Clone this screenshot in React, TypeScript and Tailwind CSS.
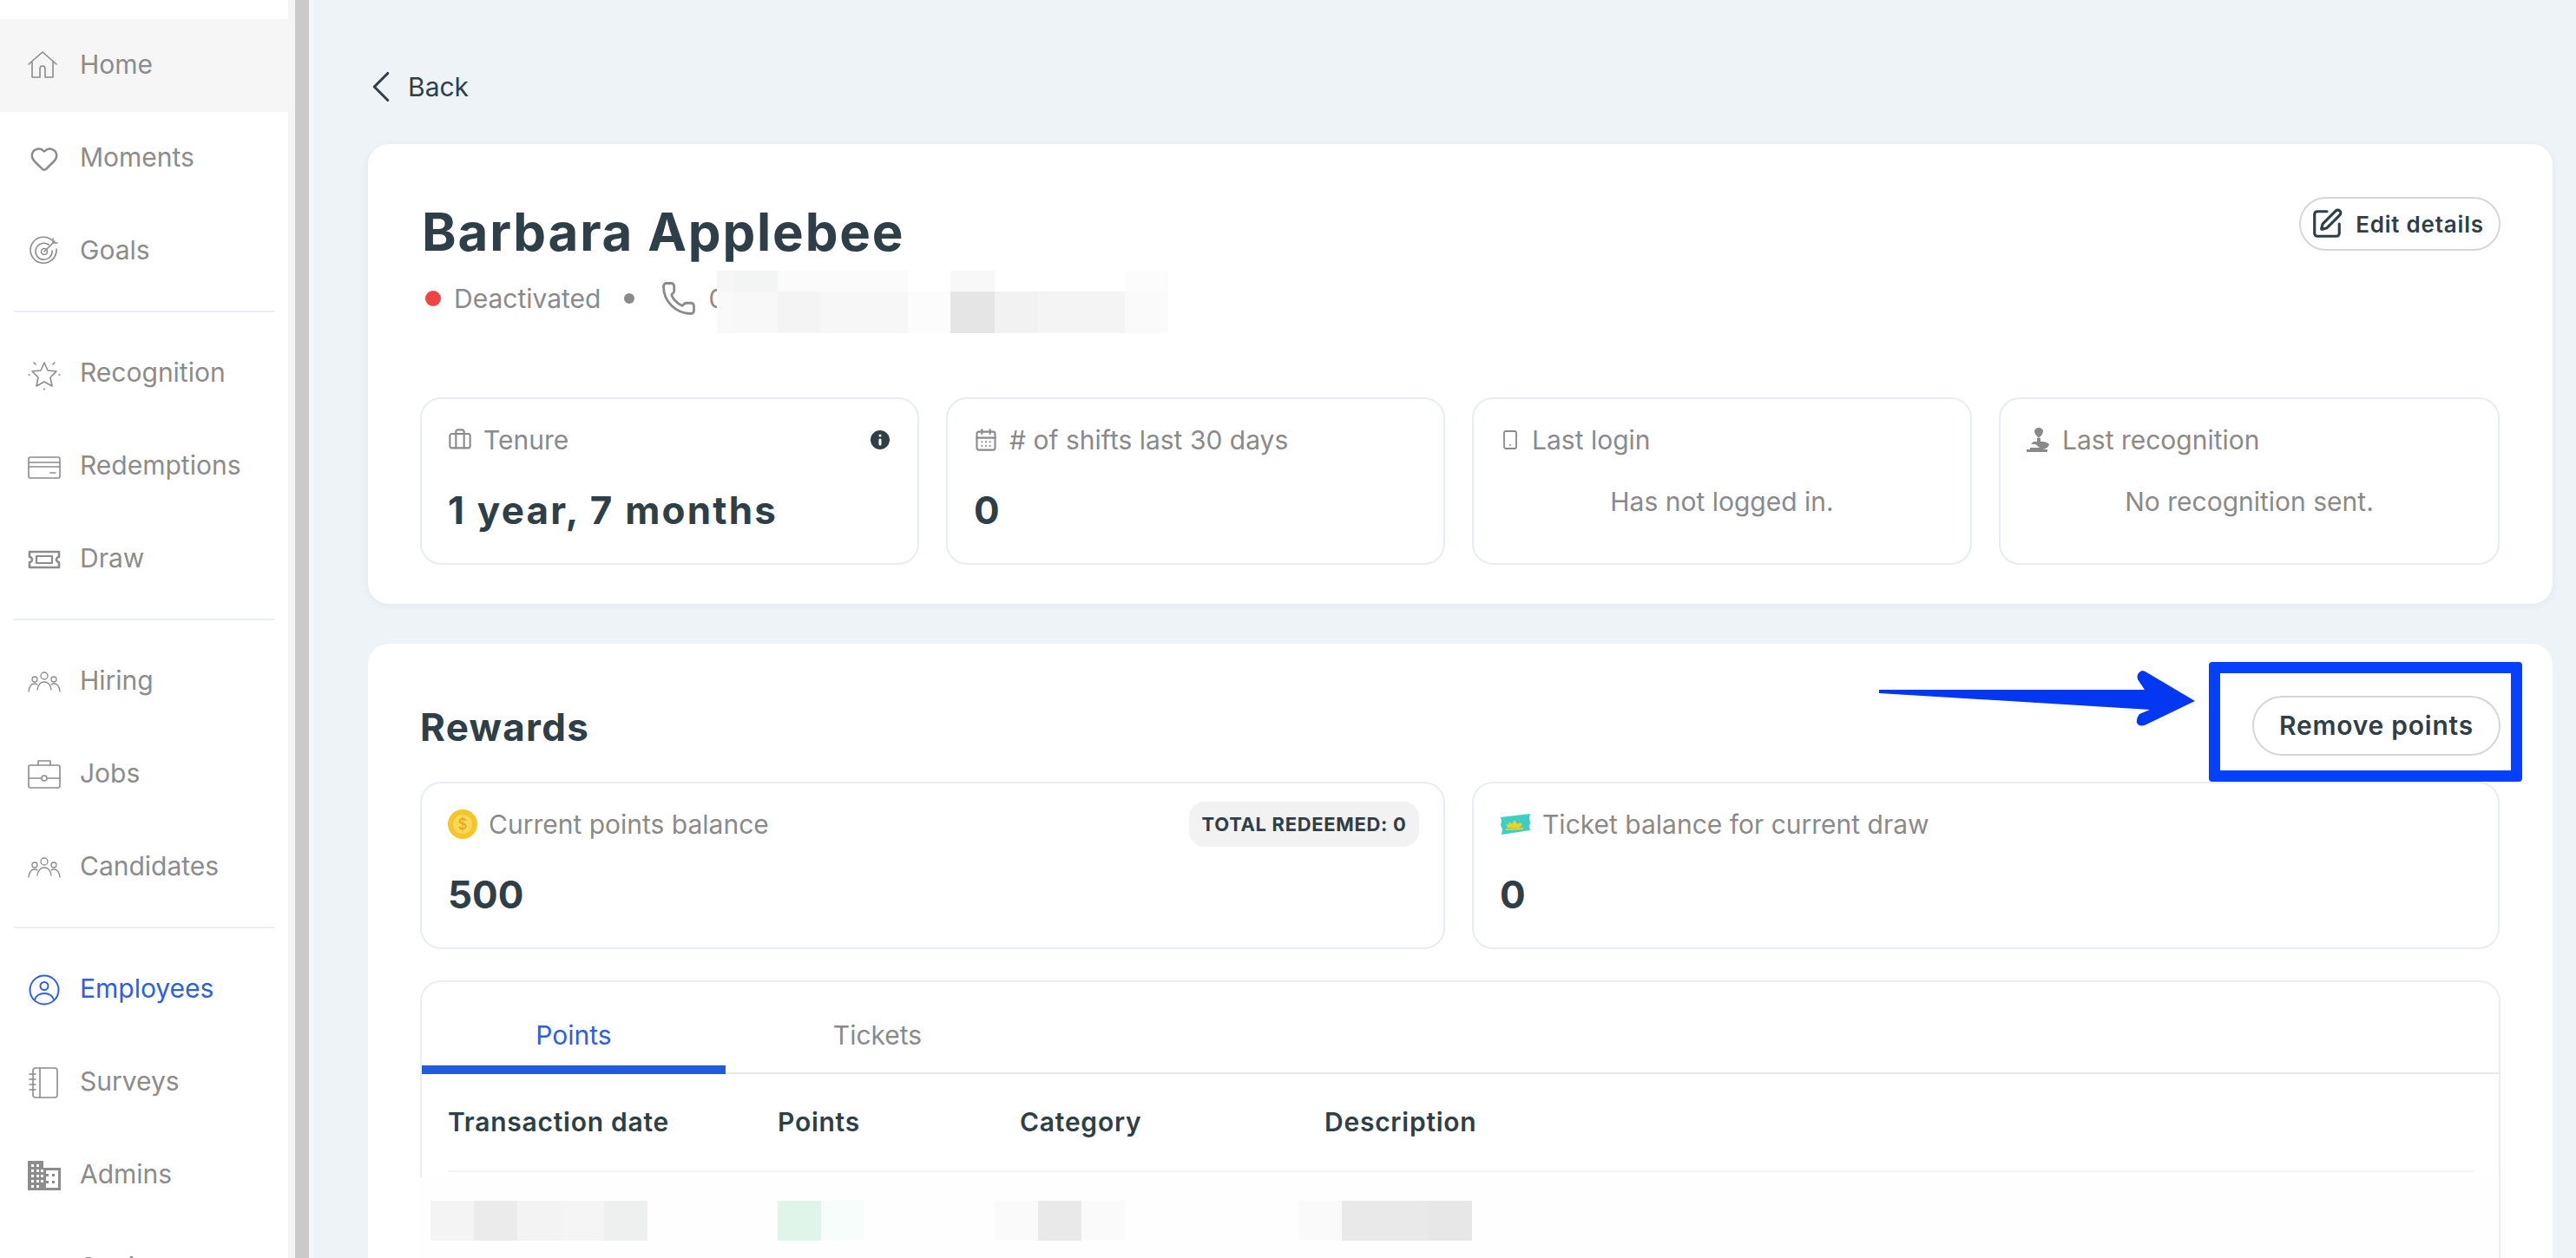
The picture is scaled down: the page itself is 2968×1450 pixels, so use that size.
import type { ReactNode } from "react";
import { Briefcase, CalendarDays, ChevronLeft, Heart, Info, Phone, Smartphone, SquarePen } from "lucide-react";

const ink = "text-[#2f3f48]";

function IconBox({ children, className = "" }: { children: ReactNode; className?: string }) {
  return (
    <svg className={`w-[38px] h-[38px] shrink-0 ${className}`} viewBox="0 0 38 38" fill="none" stroke="currentColor" strokeWidth="1.6" strokeLinecap="round" strokeLinejoin="round">
      {children}
    </svg>
  );
}

const HomeIcon = () => (
  <IconBox>
    <path d="M1 17 17 3 33 17M5 14v18h9V22a3 3 0 0 1 6 0v10h9V14" />
  </IconBox>
);
const GoalIcon = () => (
  <IconBox>
    <path d="M28 6a15 15 0 1 0 5 10M24 11a9.5 9.5 0 1 0 4 7" />
    <circle cx="19" cy="19" r="3.5" />
    <path d="M19 19 31 7M29 4v5h5" />
  </IconBox>
);
const StarIcon = () => (
  <IconBox>
    <path d="M19 6l4 9 10 1-7 7 2 10-9-5-9 5 2-10-7-7 10-1z" />
    <path d="M7 6l2 2M31 6l-2 2M1 20h1M36 20h1M19 36v1" />
  </IconBox>
);
const CardIcon = () => (
  <IconBox>
    <rect x="1" y="8" width="36" height="24" rx="2" />
    <path d="M1 14h36M1 19h36M26 26h6" />
  </IconBox>
);
const TicketIcon = () => (
  <IconBox>
    <path strokeWidth="2.6" d="M2 10h34v6a3 3 0 0 0 0 6v6H2v-6a3 3 0 0 0 0-6z" />
    <rect x="10" y="15" width="18" height="8" strokeWidth="2.2" />
  </IconBox>
);
const PeopleIcon = () => (
  <IconBox>
    <circle cx="19" cy="12" r="4" strokeWidth="1.3" />
    <circle cx="8" cy="16" r="3" strokeWidth="1.3" />
    <circle cx="30" cy="16" r="3" strokeWidth="1.3" />
    <path strokeWidth="1.3" d="M11 28c1-6 4-9 8-9s7 3 8 9M1 30c.5-5 3-9 7-9 1 0 2 .3 3 1M37 30c-.5-5-3-9-7-9-1 0-2 .3-3 1" />
  </IconBox>
);
const JobsIcon = () => (
  <IconBox>
    <rect x="1" y="8" width="36" height="26" rx="2" />
    <path d="M12 8V3h14v5M1 23h14M23 23h14" />
    <circle cx="19" cy="23" r="3" />
  </IconBox>
);
const EmployeeIcon = () => (
  <IconBox>
    <circle cx="19" cy="19" r="16.5" strokeWidth="2" />
    <circle cx="19" cy="14.5" r="4.5" strokeWidth="2" />
    <path strokeWidth="2" d="M8 30c2-5 6-7 11-7s9 2 11 7" />
  </IconBox>
);
const SurveyIcon = () => (
  <IconBox>
    <rect x="6" y="2" width="28" height="34" rx="3" />
    <path d="M14 2v34M2 9h7M2 15h7M2 21h7M2 27h7" />
  </IconBox>
);
const AdminIcon = () => (
  <svg className="w-[38px] h-[38px] shrink-0" viewBox="0 0 38 38" fill="currentColor">
    <path
      fillRule="evenodd"
      d="M0 2h18v8h20v26H0zM4 6h3v3H4zM10 6h3v3h-3zM4 12h3v3H4zM10 12h3v3h-3zM15 12h3v3h-3zM4 18h3v3H4zM10 18h3v3h-3zM15 18h3v3h-3zM4 24h3v3H4zM10 24h3v3h-3zM15 24h3v3h-3zM4 30h3v3H4zM10 30h3v3h-3zM21 13h14v20H21z"
    />
    <rect x="21" y="17" width="3" height="3" />
    <rect x="28" y="17" width="3" height="3" />
    <rect x="21" y="25" width="3" height="3" />
    <rect x="28" y="25" width="3" height="3" />
  </svg>
);
const SettingsIcon = () => (
  <svg className="w-[38px] h-[38px] shrink-0" viewBox="0 0 38 38" fill="currentColor">
    <circle cx="19" cy="24" r="13" />
    <rect x="15" y="7" width="8" height="8" />
  </svg>
);

type NavItem = { label: string; icon: ReactNode; hover?: boolean; active?: boolean };

const navGroups: NavItem[][] = [
  [
    { label: "Home", icon: <HomeIcon />, hover: true },
    { label: "Moments", icon: <Heart className="w-[34px] h-[34px] mx-[2px] shrink-0" strokeWidth={1.8} /> },
    { label: "Goals", icon: <GoalIcon /> },
  ],
  [
    { label: "Recognition", icon: <StarIcon /> },
    { label: "Redemptions", icon: <CardIcon /> },
    { label: "Draw", icon: <TicketIcon /> },
  ],
  [
    { label: "Hiring", icon: <PeopleIcon /> },
    { label: "Jobs", icon: <JobsIcon /> },
    { label: "Candidates", icon: <PeopleIcon /> },
  ],
  [
    { label: "Employees", icon: <EmployeeIcon />, active: true },
    { label: "Surveys", icon: <SurveyIcon /> },
    { label: "Admins", icon: <AdminIcon /> },
    { label: "Settings", icon: <SettingsIcon /> },
  ],
];

function Sidebar() {
  return (
    <aside className="w-[332px] shrink-0 bg-white pt-[22px] font-['Inter',sans-serif] text-[30px]">
      {navGroups.map((group, i) => (
        <div key={group[0].label}>
          {i > 0 && <div className="mx-4 mt-[15px] mb-[17px] h-[2px] bg-[#e9edf3]" />}
          {group.map((item) => (
            <div
              key={item.label}
              className={`flex h-[107px] items-center gap-[22px] pl-[32px] ${item.hover ? "bg-[#f6f6f6]" : ""} ${item.active ? "text-[#2d5fe0]" : "text-[#8c8c8c]"}`}
            >
              {item.icon}
              <span className="-mt-[2px]">{item.label}</span>
            </div>
          ))}
        </div>
      ))}
    </aside>
  );
}

type Cell = { w: number; c: string };

function PixelRow({ cells, className = "" }: { cells: Cell[]; className?: string }) {
  return (
    <div className={`flex ${className}`}>
      {cells.map((cell, i) => (
        <div key={i} className="h-full shrink-0" style={{ width: cell.w, background: cell.c }} />
      ))}
    </div>
  );
}

const phoneTop: Cell[] = [
  { w: 19, c: "#f6f6f6" },
  { w: 51, c: "#f3f5f5" },
  { w: 150, c: "#fbfbfb" },
  { w: 49, c: "#ffffff" },
  { w: 51, c: "#f8f8f8" },
  { w: 150, c: "#ffffff" },
  { w: 50, c: "#fcfcfc" },
];
const phoneBottom: Cell[] = [
  { w: 19, c: "#f9f9f9" },
  { w: 51, c: "#f8f8f8" },
  { w: 49, c: "#f4f4f4" },
  { w: 101, c: "#f7f7f7" },
  { w: 49, c: "#fcfcfc" },
  { w: 51, c: "#e5e5e5" },
  { w: 50, c: "#f2f2f2" },
  { w: 100, c: "#f4f4f4" },
  { w: 50, c: "#fafafa" },
];

function StatCard({ icon, label, right, children }: { icon: ReactNode; label: string; right?: ReactNode; children: ReactNode }) {
  return (
    <div className="h-[193px] rounded-[24px] border-2 border-[#e8edf3] bg-white px-[30px] pt-[29px]">
      <div className="flex h-[36px] items-center justify-between">
        <div className="flex items-center gap-[13px] text-[#8a8a8a]">
          {icon}
          <span className="text-[30px] leading-none">{label}</span>
        </div>
        {right}
      </div>
      {children}
    </div>
  );
}

const BigValue = ({ children }: { children: ReactNode }) => (
  <div className={`mt-[35px] text-[44px] font-bold leading-[56px] ${ink}`}>{children}</div>
);
const Muted = ({ children }: { children: ReactNode }) => (
  <div className="mt-[25px] text-center text-[30px] leading-[56px] text-[#8a8a8a]">{children}</div>
);

function OutlineButton({ children, className = "" }: { children: ReactNode; className?: string }) {
  return (
    <div className={`flex items-center justify-center rounded-full border-2 border-[#d6d6d6] bg-white font-semibold ${ink} ${className}`}>
      {children}
    </div>
  );
}

function Coin() {
  return (
    <svg className="h-[34px] w-[34px] shrink-0" viewBox="0 0 34 34">
      <circle cx="17" cy="17" r="17" fill="#f5c52c" />
      <circle cx="17" cy="17" r="11" fill="#fbd75b" />
      <text x="17" y="23" textAnchor="middle" fontSize="17" fontFamily="Inter, sans-serif" fill="#e0a615">$</text>
    </svg>
  );
}

function Tickets() {
  return (
    <svg className="h-[24px] w-[36px] shrink-0" viewBox="0 0 36 24">
      <path d="M1 4 35 0l-1 5 1 5-1 5 1 4-33 5 1-6-2-5 1-5z" fill="#3ccfc8" />
      <path d="M7 11l3 2 1-4 3 3 3-5 3 5 4-2 2 3-4 3H9z" fill="#f2d21f" />
      <path d="M7 18l20-1" stroke="#f2d21f" strokeWidth="2" />
    </svg>
  );
}

function HandHeart() {
  return (
    <svg className="h-[28px] w-[28px] shrink-0" viewBox="0 0 28 28" fill="#8a8a8a">
      <path d="M14 0c-3 0-5 2-5 4 0 3 3 6 5 8 2-2 5-5 5-8 0-2-2-4-5-4z" />
      <rect x="12" y="12" width="4" height="4" />
      <path d="M8 16h10c3 0 6 1 8 3-1 4-5 6-9 6H4v-2h11l-5-4H5z" />
      <rect x="0" y="25" width="24" height="3" />
    </svg>
  );
}

function Arrow() {
  return (
    <svg className="absolute left-[2165px] top-[773px]" width="364" height="65" viewBox="0 0 364 65">
      <path
        d="M0 22 L306 22 L298 10 Q296 3 303 0 Q306 0 310 3 L364 35 L308 62 Q300 66 297 60 Q296 55 300 50 L312 45 L0 26 Z"
        fill="#0437f2"
      />
    </svg>
  );
}

function Points() {
  const rows: { x: string; cells: Cell[] }[] = [
    {
      x: "w-[400px]",
      cells: [
        { w: 50, c: "#f4f4f4" },
        { w: 50, c: "#ebebeb" },
        { w: 50, c: "#f3f3f3" },
        { w: 50, c: "#f5f5f5" },
        { w: 50, c: "#eeefef" },
      ],
    },
    { x: "w-[250px]", cells: [{ w: 50, c: "#e0f5ea" }, { w: 50, c: "#f7fdfa" }] },
    {
      x: "w-[350px]",
      cells: [
        { w: 50, c: "#fafafa" },
        { w: 50, c: "#e9e9e9" },
        { w: 50, c: "#fafafa" },
      ],
    },
    {
      x: "w-[250px]",
      cells: [
        { w: 50, c: "#fafafa" },
        { w: 100, c: "#e9e9e9" },
        { w: 50, c: "#e7e7e7" },
      ],
    },
  ];
  return (
    <div className="relative mt-[36px] h-[340px] rounded-t-[24px] border-2 border-b-0 border-[#eeeeee]">
      <div className="flex h-[106px] border-b-2 border-[#e9e9e9]">
        <div className="-mb-[2px] flex w-[350px] items-center justify-center border-b-[10px] border-[#1f5bdc] pt-[26px] text-[30px] text-[#2d5fe0]">Points</div>
        <div className="flex w-[350px] items-center justify-center pt-[18px] text-[30px] text-[#8a8a8a]">Tickets</div>
      </div>
      <div className={`mx-[30px] flex h-[113px] items-center border-b-2 border-[#f3f3f3] text-[30px] font-semibold tracking-[0.025em] ${ink}`}>
        <div className="w-[380px]">Transaction date</div>
        <div className="w-[279px]">Points</div>
        <div className="w-[351px]">Category</div>
        <div>Description</div>
      </div>
      <div className="absolute left-[-4px] right-0 top-[225px] flex h-[120px] bg-[#fefefe] pl-[14px] pt-[27px]">
        {rows.map((r, i) => (
          <div key={i} className={r.x}>
            <PixelRow cells={r.cells} className="h-[46px]" />
          </div>
        ))}
      </div>
    </div>
  );
}

export default function App() {
  return (
    <div className="relative flex h-[1450px] overflow-hidden bg-[#eef3f7] font-['Inter',sans-serif]">
      <Sidebar />
      <div className="w-[8px] shrink-0 bg-[#f5f5f5]" />
      <div className="w-[16px] shrink-0 bg-[#cbcbcb]" />
      <div className="w-[6px] shrink-0 bg-[#f5f7f9]" />

      <main className="min-w-0 flex-1 pl-[62px] pr-[27px]">
        <div className={`flex h-[166px] items-center pt-[34px] text-[30px] ${ink}`}>
          <ChevronLeft className="-ml-[16px] h-[62px] w-[62px]" strokeWidth={1.2} />
          <span>Back</span>
        </div>

        <section className="rounded-[24px] bg-white px-[60px] pt-[61px] pb-[45px] shadow-[0_2px_10px_rgba(30,50,70,0.06)]">
          <div className="flex h-[231px] items-start justify-between">
            <div>
              <h1 className={`pl-[2px] text-[60px] font-bold leading-[80px] tracking-[0.03em] ${ink}`}>Barbara Applebee</h1>
              <div className="relative mt-[17px] flex h-[40px] items-center text-[30px] text-[#8a8a8a]">
                <span className="ml-[6px] h-[18px] w-[18px] rounded-full bg-[#f04343]" />
                <span className="ml-[15px]">Deactivated</span>
                <span className="ml-[27px] h-[12px] w-[12px] rounded-full bg-[#8a8a8a]" />
                <Phone className="ml-[30px] h-[42px] w-[42px]" strokeWidth={1.6} />
                <span className="ml-[13px]">0</span>
                <div className="absolute left-[342px] top-[-12px]">
                  <PixelRow cells={phoneTop} className="h-[24px]" />
                  <PixelRow cells={phoneBottom} className="h-[48px]" />
                </div>
              </div>
            </div>
            <OutlineButton className="h-[62px] w-[232px] gap-[14px] pr-[6px] text-[26px] tracking-[0.03em]">
              <SquarePen className="h-[38px] w-[38px]" strokeWidth={2} />
              <span>Edit details</span>
            </OutlineButton>
          </div>

          <div className="grid grid-cols-[575px_575px_576px_577px] gap-x-[31px]">
            <StatCard
              icon={<Briefcase className="h-[28px] w-[28px]" strokeWidth={1.8} />}
              label="Tenure"
              right={<Info className={`-mr-[2px] h-[30px] w-[30px] fill-[#2f3f48] stroke-white ${ink}`} strokeWidth={2.4} />}
            >
              <BigValue>
                <span className="tracking-[0.05em]">1 year, 7 months</span>
              </BigValue>
            </StatCard>
            <StatCard icon={<CalendarDays className="h-[28px] w-[28px]" strokeWidth={1.8} />} label="# of shifts last 30 days">
              <BigValue>0</BigValue>
            </StatCard>
            <StatCard icon={<Smartphone className="h-[28px] w-[24px]" strokeWidth={1.8} />} label="Last login">
              <Muted>Has not logged in.</Muted>
            </StatCard>
            <StatCard icon={<HandHeart />} label="Last recognition">
              <Muted>No recognition sent.</Muted>
            </StatCard>
          </div>
        </section>

        <section className="mt-[46px] h-[800px] rounded-t-[24px] bg-white px-[60px] pt-[60px]">
          <div className="flex h-[99px] items-start justify-between">
            <h2 className={`text-[44px] font-bold leading-[72px] tracking-[0.03em] ${ink}`}>Rewards</h2>
            <OutlineButton className="h-[69px] w-[286px] text-[30px] tracking-[0.025em]">Remove points</OutlineButton>
          </div>

          <div className="grid grid-cols-[1181px_1184px] gap-x-[31px]">
            <StatCard
              icon={<Coin />}
              label="Current points balance"
              right={
                <span className={`-mr-[2px] flex h-[52px] w-[265px] items-center justify-center rounded-[18px] bg-[#f2f2f2] text-[22px] font-bold tracking-[0.03em] ${ink}`}>
                  TOTAL REDEEMED: 0
                </span>
              }
            >
              <BigValue>500</BigValue>
            </StatCard>
            <StatCard icon={<Tickets />} label="Ticket balance for current draw">
              <BigValue>0</BigValue>
            </StatCard>
          </div>

          <Points />
        </section>
      </main>

      {/* Annotation drawn on top of the screenshot */}
      <Arrow />
      <div className="absolute left-[2545px] top-[763px] h-[138px] w-[361px] rounded-[4px] border-[13px] border-[#0540ff]" />
    </div>
  );
}
